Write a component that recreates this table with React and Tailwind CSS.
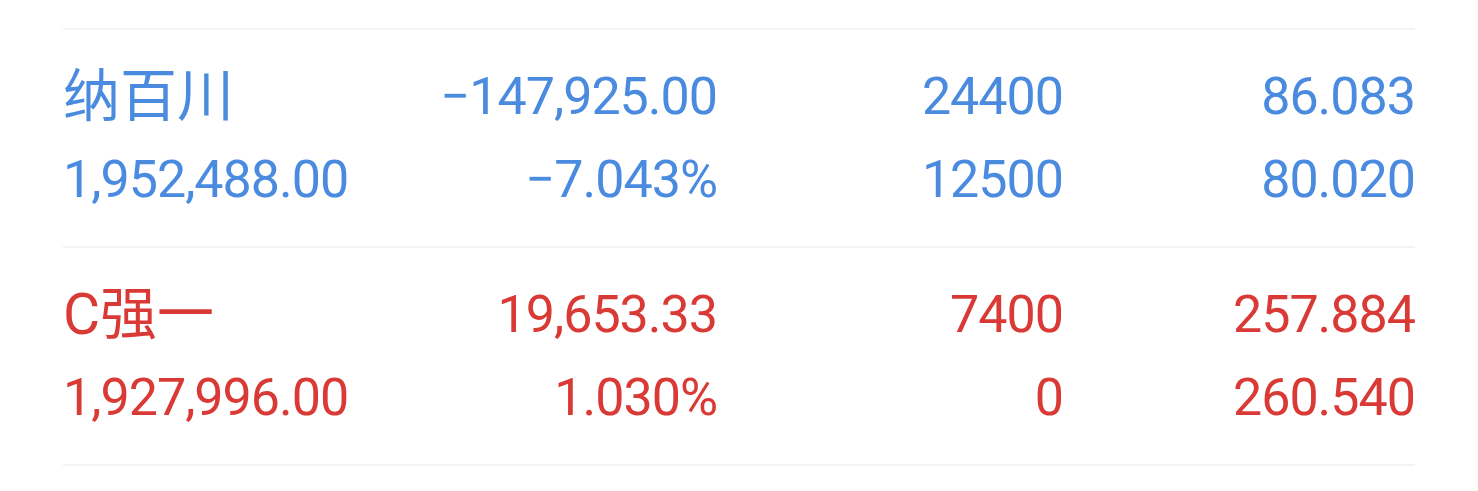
const ROWS = [
  {
    name: '纳百川',
    cap: '1,952,488.00',
    pnl: '−147,925.00',
    pct: '−7.043%',
    qty: '24400',
    avail: '12500',
    price: '86.083',
    cost: '80.020',
    tone: 'text-[#4a8be0]',
  },
  {
    name: 'C强一',
    cap: '1,927,996.00',
    pnl: '19,653.33',
    pct: '1.030%',
    qty: '7400',
    avail: '0',
    price: '257.884',
    cost: '260.540',
    tone: 'text-[#d93a36]',
  },
]

export default function App() {
  return (
    <div className="w-[1478px] h-[491px] bg-white pt-[28px] overflow-hidden"
      style={{ fontFamily: 'Roboto, "Noto Sans CJK SC", sans-serif' }}>
      {ROWS.map(row => (
        <div key={row.name}>
          <div className="h-[2px] bg-[#f3f3f3] mx-[63px]" />
          <div className={`grid grid-cols-[300px_354px_346px_352px] px-[63px] py-[25px] text-[52px] leading-[83px] tracking-[-1px] ${row.tone}`}>
            <div className="flex flex-col">
              <span className="text-[57px] tracking-normal">{row.name}</span>
              <span>{row.cap}</span>
            </div>
            <div className="flex flex-col items-end">
              <span>{row.pnl}</span>
              <span>{row.pct}</span>
            </div>
            <div className="flex flex-col items-end">
              <span>{row.qty}</span>
              <span>{row.avail}</span>
            </div>
            <div className="flex flex-col items-end">
              <span>{row.price}</span>
              <span>{row.cost}</span>
            </div>
          </div>
        </div>
      ))}
      <div className="h-[2px] bg-[#f3f3f3] mx-[63px]" />
    </div>
  )
}
